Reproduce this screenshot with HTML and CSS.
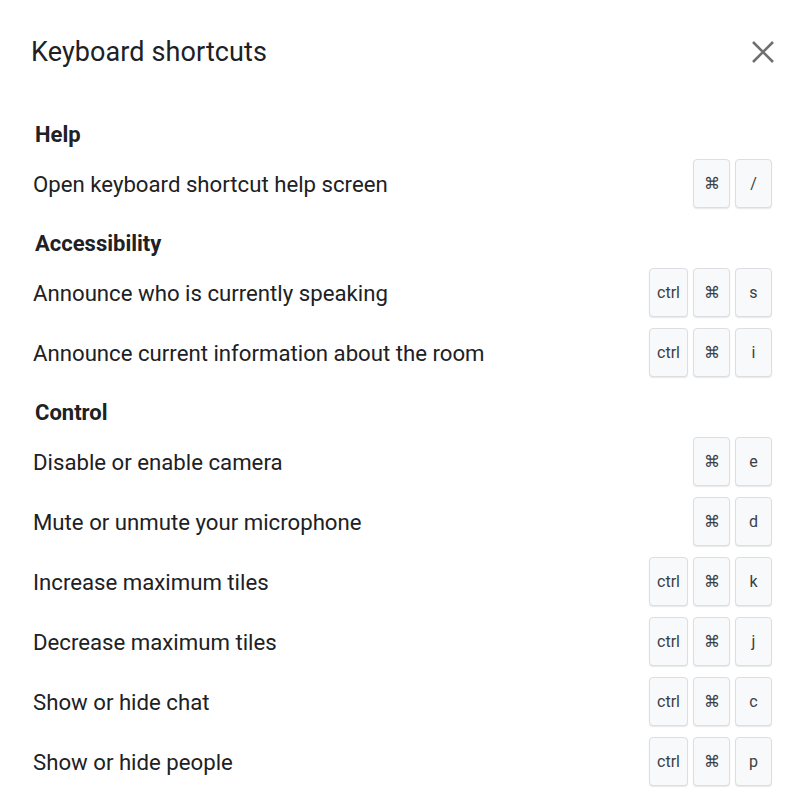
FILE: index.html
```html
<!DOCTYPE html>
<html>
<head>
<meta charset="utf-8">
<link rel="stylesheet" href="styles.css">
</head>
<body>
<div class="dialog">
  <div class="header">
    <h1 class="title">Keyboard shortcuts</h1>
    <button class="close" aria-label="Close">
      <svg width="24" height="24" viewBox="0 0 24 24"><path d="M2 2L22 22M22 2L2 22" stroke="#6f6f6f" stroke-width="2.6" fill="none"/></svg>
    </button>
  </div>
  <div class="content">
    <h2 class="section">Help</h2>
    <div class="row"><span class="label">Open keyboard shortcut help screen</span><span class="keys"><kbd class="key">⌘</kbd><kbd class="key">/</kbd></span></div>

    <h2 class="section">Accessibility</h2>
    <div class="row"><span class="label">Announce who is currently speaking</span><span class="keys"><kbd class="key">ctrl</kbd><kbd class="key">⌘</kbd><kbd class="key">s</kbd></span></div>
    <div class="row"><span class="label">Announce current information about the room</span><span class="keys"><kbd class="key">ctrl</kbd><kbd class="key">⌘</kbd><kbd class="key">i</kbd></span></div>

    <h2 class="section">Control</h2>
    <div class="row"><span class="label">Disable or enable camera</span><span class="keys"><kbd class="key">⌘</kbd><kbd class="key">e</kbd></span></div>
    <div class="row"><span class="label">Mute or unmute your microphone</span><span class="keys"><kbd class="key">⌘</kbd><kbd class="key">d</kbd></span></div>
    <div class="row"><span class="label">Increase maximum tiles</span><span class="keys"><kbd class="key">ctrl</kbd><kbd class="key">⌘</kbd><kbd class="key">k</kbd></span></div>
    <div class="row"><span class="label">Decrease maximum tiles</span><span class="keys"><kbd class="key">ctrl</kbd><kbd class="key">⌘</kbd><kbd class="key">j</kbd></span></div>
    <div class="row"><span class="label">Show or hide chat</span><span class="keys"><kbd class="key">ctrl</kbd><kbd class="key">⌘</kbd><kbd class="key">c</kbd></span></div>
    <div class="row"><span class="label">Show or hide people</span><span class="keys"><kbd class="key">ctrl</kbd><kbd class="key">⌘</kbd><kbd class="key">p</kbd></span></div>
  </div>
</div>
</body>
</html>
```
FILE: styles.css
```css
* { box-sizing: border-box; }
html, body {
  margin: 0;
  padding: 0;
  background: #ffffff;
}
body {
  font-family: Roboto, "Liberation Sans", Arial, sans-serif;
  color: #202124;
}
.dialog {
  width: 800px;
  height: 808px;
  padding: 0 28px 0 33px;
  overflow: hidden;
}
.header {
  display: flex;
  align-items: center;
  justify-content: space-between;
  height: 104px;
  padding-bottom: 1px;
}
.title {
  margin: 0 0 0 -2px;
  font-size: 27px;
  font-weight: 400;
  line-height: 32px;
  color: #202124;
  letter-spacing: 0.1px;
}
.close {
  border: 0;
  background: none;
  padding: 0;
  width: 24px;
  height: 24px;
  margin-right: -3px;
}
.close svg { display: block; }
.content {
  display: flex;
  flex-direction: column;
}
.section {
  margin: 0 0 0 2px;
  height: 49px;
  padding-top: 19px;
  font-size: 22px;
  line-height: 24px;
  font-weight: 700;
  color: #202124;
}
.row {
  display: flex;
  align-items: center;
  justify-content: space-between;
  height: 60px;
}
.label {
  font-size: 22.2px;
  line-height: 28px;
  color: #202124;
  transform: translateY(1px);
}
.keys {
  display: flex;
  gap: 5px;
}
.key {
  display: flex;
  align-items: center;
  justify-content: center;
  min-width: 37px;
  height: 49px;
  padding: 0 7px;
  background: #f8f9fa;
  border: 1.5px solid #dcdee1;
  border-radius: 4px;
  box-shadow: 0 1px 1px rgba(60, 64, 67, 0.12);
  font-family: Roboto, "Liberation Sans", Arial, sans-serif;
  font-size: 16px;
  color: #3c4043;
}
```
